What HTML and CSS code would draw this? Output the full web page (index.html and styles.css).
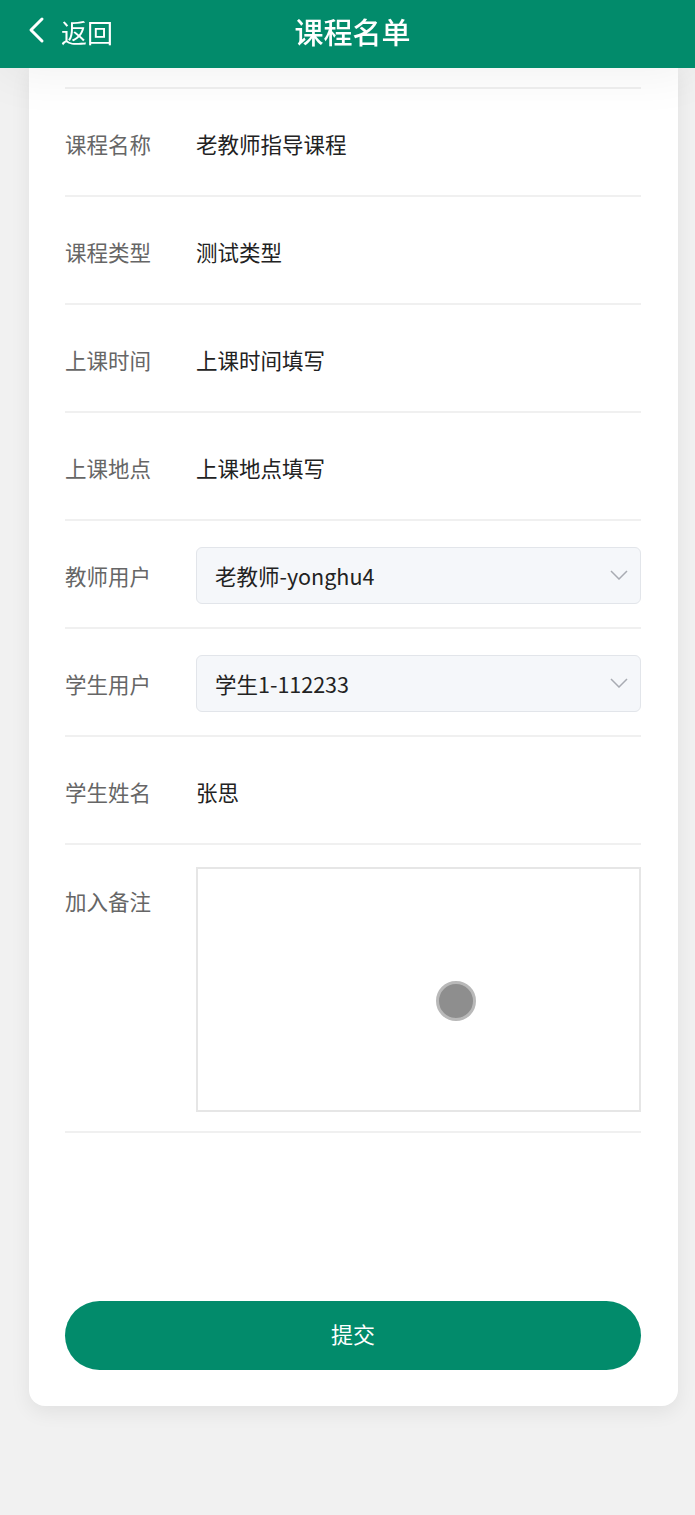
FILE: index.html
```html
<!DOCTYPE html>
<html lang="zh">
<head>
<meta charset="utf-8">
<link rel="stylesheet" href="styles.css">
</head>
<body>
<header class="topbar">
  <div class="back">
    <svg class="back-icon" width="20" height="28" viewBox="0 0 20 28"><path d="M16 3 L5 14 L16 25" fill="none" stroke="#fff" stroke-width="3" stroke-linecap="round" stroke-linejoin="round"/></svg>
    <span>返回</span>
  </div>
  <h1 class="title">课程名单</h1>
</header>
<main class="card">
  <div class="row-top"></div>
  <div class="row"><span class="label">课程名称</span><span class="value">老教师指导课程</span></div>
  <div class="row"><span class="label">课程类型</span><span class="value">测试类型</span></div>
  <div class="row"><span class="label">上课时间</span><span class="value">上课时间填写</span></div>
  <div class="row"><span class="label">上课地点</span><span class="value">上课地点填写</span></div>
  <div class="row"><span class="label">教师用户</span>
    <div class="select"><span>老教师-yonghu4</span>
      <svg width="18" height="10" viewBox="0 0 18 10"><path d="M1 1 L9 9 L17 1" fill="none" stroke="#a8abb2" stroke-width="1.5"/></svg>
    </div>
  </div>
  <div class="row"><span class="label">学生用户</span>
    <div class="select"><span>学生1-112233</span>
      <svg width="18" height="10" viewBox="0 0 18 10"><path d="M1 1 L9 9 L17 1" fill="none" stroke="#a8abb2" stroke-width="1.5"/></svg>
    </div>
  </div>
  <div class="row"><span class="label">学生姓名</span><span class="value">张思</span></div>
  <div class="row row-area"><span class="label">加入备注</span>
    <div class="area"><span class="touch"></span></div>
  </div>
  <div class="actions"><button class="submit">提交</button></div>
</main>
</body>
</html>
```
FILE: styles.css
```css
html, body {
  margin: 0;
  padding: 0;
  background: #f1f1f1;
  font-family: "Noto Sans CJK SC", "Noto Sans", sans-serif;
}
body {
  height: 1515px;
  overflow: hidden;
}
.topbar {
  position: fixed;
  top: 0;
  left: 0;
  right: 0;
  height: 68px;
  box-sizing: border-box;
  padding-bottom: 6px;
  background: #028b6b;
  display: flex;
  align-items: center;
  justify-content: center;
  box-shadow: 0 6px 50px rgba(0, 0, 0, 0.06);
  z-index: 2;
}
.back {
  position: absolute;
  left: 26px;
  top: 0;
  height: 62px;
  display: flex;
  align-items: center;
  gap: 15px;
  color: #fff;
  font-size: 26px;
}
.back-icon {
  margin-top: -2px;
}
.title {
  margin: 0 0 0 10px;
  color: #fff;
  font-size: 29px;
  font-weight: 500;
  letter-spacing: 0;
}
.card {
  margin: 68px 17px 0 29px;
  background: #fff;
  border-radius: 0 0 16px 16px;
  padding: 0 37px 36px 36px;
  box-shadow: 0 6px 20px rgba(0, 0, 0, 0.07);
}
.row-top {
  height: 19px;
  border-bottom: 2px solid #f0f0f0;
}
.row {
  height: 106px;
  border-bottom: 2px solid #f0f0f0;
  display: flex;
  align-items: center;
}
.label {
  width: 131px;
  flex: none;
  font-size: 21.5px;
  color: #666;
  padding-top: 2px;
}
.value {
  font-size: 21.5px;
  color: #222;
  padding-top: 2px;
}
.select {
  flex: 1;
  height: 57px;
  margin-top: 2px;
  box-sizing: border-box;
  background: #f5f7fa;
  border: 1px solid #e2e5ea;
  border-radius: 6px;
  display: flex;
  align-items: center;
  justify-content: space-between;
  padding: 0 12px 0 18px;
  font-size: 21.5px;
  color: #222;
}
.row-area {
  height: auto;
  align-items: flex-start;
  padding: 22px 0 19px;
}
.row-area .label {
  margin-top: 16px;
}
.area {
  flex: 1;
  height: 245px;
  box-sizing: border-box;
  border: 2px solid #e6e6e6;
  position: relative;
}
.touch {
  position: absolute;
  left: 238px;
  top: 112px;
  width: 40px;
  height: 40px;
  border-radius: 50%;
  background: #8e8e8e;
  border: 3px solid #b9b9b9;
  box-sizing: border-box;
}
.actions {
  padding-top: 168px;
}
.submit {
  display: block;
  width: 100%;
  height: 69px;
  border: none;
  border-radius: 35px;
  background: #028b6b;
  color: #fff;
  font-family: "Noto Sans CJK SC", sans-serif;
  font-size: 22px;
  padding: 0 0 6px;
}
```
